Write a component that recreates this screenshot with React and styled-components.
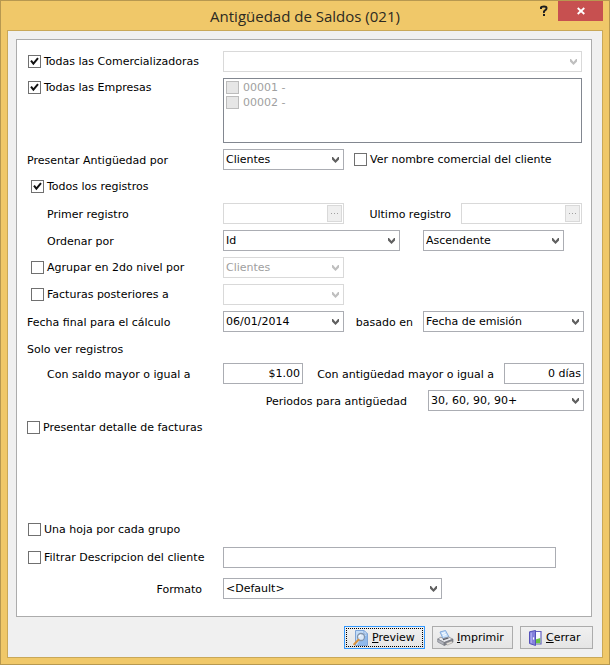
import React, { useId } from "react";
import styled, { createGlobalStyle } from "styled-components";

const GlobalStyle = createGlobalStyle`
  * { box-sizing: border-box; }
  html, body, #root { height: 100%; }
  body {
    margin: 0;
    background: #ffffff;
    color: #000000;
    font: 11px/21px "DejaVu Sans", Verdana, sans-serif;
  }
  button, input, select { font: inherit; color: inherit; margin: 0; border-radius: 0; }
`;

const Window = styled.div`
  display: flex;
  flex-direction: column;
  min-height: 100%;
  margin-right: 1px;
  padding: 0 6px 6px;
  background: #f0c869;
  border: 1px solid #b79850;
`;

const TitleBar = styled.header`
  display: grid;
  grid-template-columns: 73px 1fr 73px;
  height: 29px;
`;

const Title = styled.h1`
  grid-column: 2;
  margin: 0;
  font: 15px/30px "Open Sans", "Segoe UI", sans-serif;
  text-align: center;
  white-space: nowrap;
  color: #2d2a22;
`;

const TitleActions = styled.div`
  display: flex;
  justify-content: flex-end;
  height: 20px;
`;

const HelpButton = styled.button`
  width: 28px;
  padding: 0;
  border: 0;
  background: none;
  display: grid;
  place-items: center;
`;

const CloseButton = styled.button`
  width: 45px;
  padding: 0;
  border: 0;
  background: #c75050;
  display: grid;
  place-items: center;
`;

const Client = styled.form`
  flex: 1;
  display: flex;
  flex-direction: column;
  gap: 9px;
  padding: 8px 9px 8px 8px;
  background: #f0f0f0;
  border: 1px solid #c9a858;
`;

const Panel = styled.div`
  flex: 1;
  display: flex;
  flex-direction: column;
  gap: 6px;
  margin-right: 1px;
  padding: 11px 7px 17px 0;
  background: #ffffff;
  border: 1px solid #acacac;
`;

const Row = styled.div`
  display: grid;
  grid-template-columns: 206px minmax(0, 1fr);
  min-height: ${(p) => p.$height || 21}px;
  padding-right: ${(p) => (p.$inset ? 2 : 0)}px;
`;

const Lead = styled.div`
  display: flex;
  align-items: flex-start;
  padding-left: ${(p) => p.$indent || 10}px;
  padding-right: 21px;
  justify-content: ${(p) => (p.$end ? "flex-end" : "flex-start")};
`;

const Fields = styled.div`
  display: flex;
  gap: ${(p) => p.$gap || 10}px;
`;

const FieldGroup = styled.div`
  display: flex;
  gap: ${(p) => p.$gap || 10}px;
  margin-left: auto;
`;

const Label = styled.label`
  padding-top: 3px;
  line-height: 18px;
  white-space: nowrap;
`;

const SectionText = styled.span`
  padding-top: 5px;
  line-height: 14px;
`;

const CheckLabel = styled.label`
  display: flex;
  align-items: center;
  gap: 3px;
  height: ${(p) => (p.$compact ? 19 : 21)}px;
  white-space: nowrap;
  color: ${(p) => (p.$muted ? "#a0a0a0" : "inherit")};
`;

const CheckFrame = styled.span`
  display: grid;
  width: 13px;
  height: 13px;
  > * { grid-area: 1 / 1; }
  svg { pointer-events: none; }
`;

const CheckInput = styled.input`
  appearance: none;
  width: 13px;
  height: 13px;
  border: 1px solid #707070;
  background: #ffffff;
  &:disabled { border-color: #bcbcbc; background: #e6e6e6; }
`;

const ComboFrame = styled.div`
  display: grid;
  align-items: center;
  width: ${(p) => (p.$width ? p.$width + "px" : "100%")};
  height: 21px;
  > * { grid-area: 1 / 1; }
  svg {
    justify-self: end;
    margin: 2px 4px 0 0;
    pointer-events: none;
  }
`;

const ComboSelect = styled.select`
  appearance: none;
  width: 100%;
  height: 21px;
  padding: 0 16px 0 2px;
  border: 1px solid #abadb3;
  background: #ffffff;
  line-height: 19px;
  &:disabled { border-color: #d9d9d9; color: #a0a0a0; opacity: 1; }
`;

const TextInput = styled.input`
  width: ${(p) => p.$width}px;
  height: 21px;
  padding: 0 2px 1px 3px;
  border: 1px solid #abadb3;
  background: #ffffff;
  text-align: ${(p) => (p.$right ? "right" : "left")};
`;

const LookupFrame = styled.div`
  display: flex;
  width: 121px;
  height: 21px;
  padding: 1px;
  border: 1px solid #d9d9d9;
`;

const LookupInput = styled.input`
  flex: 1;
  min-width: 0;
  padding: 0 2px;
  border: 0;
  background: #ffffff;
`;

const LookupButton = styled.button`
  display: grid;
  place-items: center;
  width: 15px;
  padding: 0;
  border: 1px solid #d9d9d9;
  background: #efefef;
`;

const CompanyList = styled.div`
  width: 100%;
  height: 65px;
  padding: 1px 2px;
  border: 1px solid #828790;
  ${CheckLabel} { height: 15px; gap: 4px; }
`;

const BottomRows = styled.div`
  display: flex;
  flex-direction: column;
  gap: 7px;
  margin-top: auto;
`;

const FormatRow = styled(Row)`
  margin-top: 3px;
`;

const Actions = styled.div`
  display: flex;
  justify-content: flex-end;
  gap: 7px;
`;

const ActionButton = styled.button`
  display: flex;
  align-items: center;
  gap: 3px;
  width: ${(p) => p.$width}px;
  height: 23px;
  padding: 0 0 0 ${(p) => p.$pad}px;
  background: linear-gradient(#f0f0f0, #e5e5e5);
  border: 1px solid ${(p) => (p.$primary ? "#3399ff" : "#acacac")};
  outline: ${(p) => (p.$primary ? "1px dotted #000000" : "none")};
  outline-offset: -3px;
`;

const Mnemonic = styled.span`
  text-decoration: underline;
  text-underline-offset: 1px;
`;

function CheckMark() {
  return (
    <svg width="13" height="13" viewBox="0 0 13 13" aria-hidden="true">
      <path d="M3 5.6 L5.4 8.6 L10 3.2" fill="none" stroke="#111" strokeWidth="2" />
    </svg>
  );
}

function Chevron({ muted }) {
  return (
    <svg width="9" height="7" viewBox="0 0 9 7" aria-hidden="true">
      <path d="M1 0 V2.5 L4.5 6 L8 2.5 V0 H7 L4.5 3 L2 0 Z" fill={muted ? "#bfbfbf" : "#606060"} />
    </svg>
  );
}

function Check({ children, checked, disabled, compact }) {
  return (
    <CheckLabel $muted={disabled} $compact={compact}>
      <CheckFrame>
        <CheckInput type="checkbox" defaultChecked={checked} disabled={disabled} />
        {checked && <CheckMark />}
      </CheckFrame>
      {children}
    </CheckLabel>
  );
}

function Combo({ id, label, value, width, disabled }) {
  return (
    <ComboFrame $width={width}>
      <ComboSelect id={id} aria-label={label} disabled={disabled} defaultValue={value}>
        <option value={value}>{value}</option>
      </ComboSelect>
      <Chevron muted={disabled} />
    </ComboFrame>
  );
}

function Lookup({ id }) {
  return (
    <LookupFrame>
      <LookupInput id={id} disabled />
      <LookupButton type="button" disabled aria-label="Buscar">
        <svg width="9" height="3" viewBox="0 0 9 3" aria-hidden="true">
          <path d="M1 1h1v1H1zM4 1h1v1H4zM7 1h1v1H7z" fill="#a0a0a0" />
        </svg>
      </LookupButton>
    </LookupFrame>
  );
}

function PreviewIcon() {
  return (
    <svg width="16" height="16" viewBox="0 0 16 16" aria-hidden="true">
      <path d="M2.5 .5H11L14.5 4V15.5H2.5Z" fill="#c3dcf7" stroke="#7fa5d8" />
      <path d="M8 8L14 5V15H4Z" fill="#8fb9ec" />
      <path d="M11 .5V4H14.5Z" fill="#f4f9ff" stroke="#7fa5d8" />
      <circle cx="8" cy="7" r="3.5" fill="#dceafa" stroke="#8394aa" strokeWidth="1.3" />
      <path d="M6 7a2 2 0 0 1 2-2" fill="none" stroke="#fff" />
      <path d="M5.5 9.7L1.2 14.3" stroke="#d9913c" strokeWidth="2" strokeLinecap="round" />
    </svg>
  );
}

function PrinterIcon() {
  return (
    <svg width="17" height="16" viewBox="0 0 17 16" aria-hidden="true">
      <path d="M3 2L8.5 .5L12 7L6 8.5Z" fill="#c9e1fb" stroke="#82a9dc" />
      <path d="M5 3.5L8 2.7M6 5.4L9.2 4.5" stroke="#fff" />
      <path d="M.7 9L4 7L6 8.7L11.5 7L16 9.2L7.2 12.5Z" fill="#e8e9ed" stroke="#8b8d94" strokeWidth=".8" />
      <path d="M.7 9L7.2 12.5V15.4L.7 12Z" fill="#b0b3bb" stroke="#777a82" strokeWidth=".6" />
      <path d="M7.2 12.5L16 9.2V12.2L7.2 15.4Z" fill="#82858e" stroke="#6a6c74" strokeWidth=".6" />
      <path d="M6 9.6L11.5 8" stroke="#565963" strokeWidth="1.1" />
      <path d="M9 13.2L14.5 11.2L16 12.4L10.5 15.2Z" fill="#e8e3dc" stroke="#999" strokeWidth=".5" />
    </svg>
  );
}

function DoorIcon() {
  return (
    <svg width="15" height="16" viewBox="0 0 15 16" aria-hidden="true">
      <path d="M4.5 1.5H13V14H4.5Z" fill="#fafaff" stroke="#6562c0" strokeWidth="1.2" />
      <path d="M7.5 9.5L12.3 8V13.3H7.5Z" fill="#69c542" />
      <path d="M1.5 1.8L7.5 .5V15.5L1.5 13.5Z" fill="#8581dc" stroke="#5551b9" />
      <path d="M2.5 3L4 2.6V13.3L2.5 12.8Z" fill="#a9a6ef" />
      <path d="M5.5 7.3V9.6" stroke="#fff" strokeWidth="1.2" />
    </svg>
  );
}

export default function App() {
  const id = useId();
  return (
    <>
      <GlobalStyle />
      <Window>
        <TitleBar>
          <Title>Antigüedad de Saldos (021)</Title>
          <TitleActions>
            <HelpButton type="button" aria-label="Ayuda">
              <svg width="8" height="12" viewBox="0 0 8 12" aria-hidden="true">
                <path d="M1 4V2.5Q1.3 1.5 4 1.5T6.5 3.2Q6.5 4.5 5 5.3T4 8" fill="none" stroke="#1e1e1e" strokeWidth="2" />
                <path d="M3 9h2v2H3z" fill="#1e1e1e" />
              </svg>
            </HelpButton>
            <CloseButton type="button" aria-label="Cerrar ventana">
              <svg width="8" height="8" viewBox="0 0 8 8" aria-hidden="true">
                <path d="M.7 1L7.3 7M7.3 1L.7 7" stroke="#fff" strokeWidth="1.8" />
              </svg>
            </CloseButton>
          </TitleActions>
        </TitleBar>

        <Client onSubmit={(e) => e.preventDefault()}>
          <Panel>
            <Row $inset>
              <Lead $indent={11}><Check checked>Todas las Comercializadoras</Check></Lead>
              <Combo label="Comercializadora" value="" disabled />
            </Row>
            <Row $inset>
              <Lead $indent={11}><Check checked compact>Todas las Empresas</Check></Lead>
              <CompanyList role="group" aria-label="Empresas">
                <Check disabled>00001 -</Check>
                <Check disabled>00002 -</Check>
              </CompanyList>
            </Row>
            <Row>
              <Lead><Label htmlFor={id + "por"}>Presentar Antigüedad por</Label></Lead>
              <Fields>
                <Combo id={id + "por"} value="Clientes" width={121} />
                <Check>Ver nombre comercial del cliente</Check>
              </Fields>
            </Row>
            <Row>
              <Lead $indent={14}><Check checked>Todos los registros</Check></Lead>
            </Row>
            <Row $inset>
              <Lead $indent={30}><Label htmlFor={id + "primer"}>Primer registro</Label></Lead>
              <Fields>
                <Lookup id={id + "primer"} />
                <FieldGroup>
                  <Label htmlFor={id + "ultimo"}>Ultimo registro</Label>
                  <Lookup id={id + "ultimo"} />
                </FieldGroup>
              </Fields>
            </Row>
            <Row>
              <Lead $indent={30}><Label htmlFor={id + "orden"}>Ordenar por</Label></Lead>
              <Fields $gap={23}>
                <Combo id={id + "orden"} value="Id" width={177} />
                <Combo label="Sentido del orden" value="Ascendente" width={141} />
              </Fields>
            </Row>
            <Row>
              <Lead $indent={14}><Check>Agrupar en 2do nivel por</Check></Lead>
              <Combo label="Segundo nivel" value="Clientes" width={121} disabled />
            </Row>
            <Row>
              <Lead $indent={14}><Check>Facturas posteriores a</Check></Lead>
              <Combo label="Fecha de facturas" value="" width={121} disabled />
            </Row>
            <Row>
              <Lead><Label htmlFor={id + "fecha"}>Fecha final para el cálculo</Label></Lead>
              <Fields>
                <Combo id={id + "fecha"} value="06/01/2014" width={121} />
                <FieldGroup>
                  <Label htmlFor={id + "base"}>basado en</Label>
                  <Combo id={id + "base"} value="Fecha de emisión" width={161} />
                </FieldGroup>
              </Fields>
            </Row>
            <Row $height={19}>
              <Lead><SectionText>Solo ver registros</SectionText></Lead>
            </Row>
            <Row>
              <Lead $indent={30}><Label htmlFor={id + "saldo"}>Con saldo mayor o igual a</Label></Lead>
              <Fields>
                <TextInput id={id + "saldo"} defaultValue="$1.00" $width={80} $right />
                <FieldGroup>
                  <Label htmlFor={id + "dias"}>Con antigüedad mayor o igual a</Label>
                  <TextInput id={id + "dias"} defaultValue="0 días" $width={80} $right />
                </FieldGroup>
              </Fields>
            </Row>
            <Row>
              <Lead />
              <FieldGroup $gap={21}>
                <Label htmlFor={id + "periodos"}>Periodos para antigüedad</Label>
                <Combo id={id + "periodos"} value="30, 60, 90, 90+" width={156} />
              </FieldGroup>
            </Row>
            <Row>
              <Lead><Check>Presentar detalle de facturas</Check></Lead>
            </Row>

            <BottomRows>
              <Row>
                <Lead $indent={11}><Check>Una hoja por cada grupo</Check></Lead>
              </Row>
              <Row>
                <Lead $indent={11}><Check>Filtrar Descripcion del cliente</Check></Lead>
                <TextInput aria-label="Descripcion del cliente" $width={333} />
              </Row>
              <FormatRow>
                <Lead $end><Label htmlFor={id + "formato"}>Formato</Label></Lead>
                <Combo id={id + "formato"} value="<Default>" width={219} />
              </FormatRow>
            </BottomRows>
          </Panel>

          <Actions>
            <ActionButton type="submit" $width={81} $pad={8} $primary>
              <PreviewIcon />
              <span><Mnemonic>P</Mnemonic>review</span>
            </ActionButton>
            <ActionButton type="button" $width={81} $pad={4}>
              <PrinterIcon />
              <span><Mnemonic>I</Mnemonic>mprimir</span>
            </ActionButton>
            <ActionButton type="button" $width={73} $pad={7}>
              <DoorIcon />
              <span><Mnemonic>C</Mnemonic>errar</span>
            </ActionButton>
          </Actions>
        </Client>
      </Window>
    </>
  );
}
